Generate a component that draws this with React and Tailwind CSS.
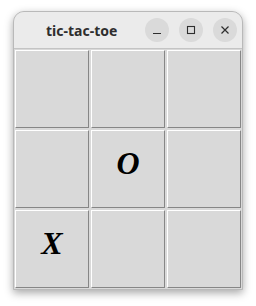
import React, { useState } from "react";

export default function App() {
  const [board] = useState(["", "", "", "", "O", "", "X", "", ""]);

  return (
    <div className="w-[256px] h-[306px] bg-white pt-[11px] pl-[13px]">
      <div className="w-[230px] h-[279px] border border-[#b9b9b9] rounded-t-[11px] bg-[#d9d9d9] shadow-[0_3px_8px_rgba(0,0,0,0.35)] overflow-hidden flex flex-col">
        <div className="h-[36px] bg-[#ebebeb] border-b border-[#c4c4c4] box-content flex items-center pr-[5px]">
          <span
            className="ml-[32px] text-[14px] font-bold text-[#2e2e2e]"
            style={{ fontFamily: '"Noto Sans", "Open Sans", sans-serif' }}
          >
            tic-tac-toe
          </span>
          <div className="ml-auto flex gap-[10px]">
            <div className="w-[24px] h-[24px] rounded-full bg-[#dadada] flex items-center justify-center">
              <svg width="10" height="10" viewBox="0 0 10 10">
                <path d="M1 8.5h8" stroke="#2e2e2e" strokeWidth="1.2" />
              </svg>
            </div>
            <div className="w-[24px] h-[24px] rounded-full bg-[#dadada] flex items-center justify-center">
              <svg width="10" height="10" viewBox="0 0 10 10">
                <rect x="1.5" y="1.5" width="7" height="7" fill="none" stroke="#2e2e2e" strokeWidth="1.1" />
              </svg>
            </div>
            <div className="w-[24px] h-[24px] rounded-full bg-[#dadada] flex items-center justify-center">
              <svg width="10" height="10" viewBox="0 0 10 10">
                <path d="M1.5 1.5l7 7M8.5 1.5l-7 7" stroke="#2e2e2e" strokeWidth="1.2" />
              </svg>
            </div>
          </div>
        </div>
        <div className="grid grid-cols-3 grid-rows-3 flex-1">
          {board.map((v, i) => (
            <button
              key={i}
              className="m-px border border-t-white border-l-white border-b-[#868686] border-r-[#868686] bg-[#d9d9d9] flex items-center justify-center pb-[12px] text-[32px] font-bold italic text-black"
              style={{ fontFamily: '"Liberation Serif", serif' }}
            >
              {v}
            </button>
          ))}
        </div>
      </div>
    </div>
  );
}
